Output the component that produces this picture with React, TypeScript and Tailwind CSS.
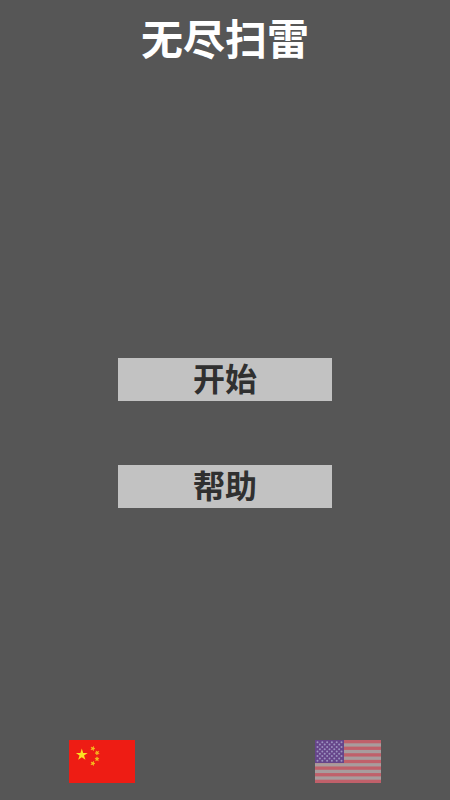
import { useState } from "react";

type Lang = "zh" | "en";

const TEXT = {
  zh: { title: "无尽扫雷", start: "开始", help: "帮助" },
  en: { title: "Endless Mines", start: "Start", help: "Help" },
};

const SMALL_STARS = [
  { x: 23.8, y: 8.5, angle: 20 },
  { x: 28.2, y: 12.8, angle: 45 },
  { x: 28, y: 19, angle: 0 },
  { x: 23.8, y: 23.4, angle: 20 },
];

const STAR_POINTS =
  "0,-1 0.225,-0.309 0.951,-0.309 0.363,0.118 0.588,0.809 0,0.382 -0.588,0.809 -0.363,0.118 -0.951,-0.309 -0.225,-0.309";

const ChinaFlag = () => (
  <svg viewBox="0 0 66 43" className="block w-full" aria-hidden="true">
    <rect width="66" height="43" fill="#ee1c14" />
    <polygon points={STAR_POINTS} fill="#fbe122" transform="translate(12.8 14.8) scale(6.2)" />
    {SMALL_STARS.map((star, index) => (
      <polygon
        key={index}
        points={STAR_POINTS}
        fill="#f5c31f"
        stroke="#f5c31f"
        strokeWidth="0.25"
        transform={`translate(${star.x} ${star.y}) rotate(${star.angle}) scale(2.2)`}
      />
    ))}
  </svg>
);

const UsaFlag = () => (
  <svg viewBox="0 0 66 43" className="block w-full" aria-hidden="true">
    <rect width="66" height="43" fill="#a89c9d" />
    {[0, 2, 4, 6, 8, 10, 12].map((row) => (
      <rect key={row} y={(row * 43) / 13} width="66" height={43 / 13} fill="#c0606a" />
    ))}
    <rect width="29" height="23" fill="#66458a" />
    {Array.from({ length: 9 }, (_, row) =>
      Array.from({ length: row % 2 ? 5 : 6 }, (_, col) => (
        <circle
          key={`${row}-${col}`}
          cx={2.5 + col * 4.8 + (row % 2 ? 2.4 : 0)}
          cy={2.3 + row * 2.3}
          r="1"
          fill="#9c93c0"
        />
      ))
    )}
  </svg>
);

const MenuButton = ({ label }: { label: string }) => (
  <button
    type="button"
    className="h-[43px] w-full bg-[#c2c2c2] pb-[5px] text-[32px] leading-9 font-bold text-[#303030] hover:bg-[#cecece]"
  >
    {label}
  </button>
);

const App = () => {
  const [lang, setLang] = useState<Lang>("zh");
  const text = TEXT[lang];

  return (
    <div className="flex min-h-screen flex-col bg-[#565656] font-['Noto_Sans_CJK_SC',sans-serif]">
      <header className="pt-3 pb-16 text-center">
        <h1 className="text-[42px] leading-[50px] font-bold text-white">{text.title}</h1>
      </header>

      <main className="flex flex-1 items-center justify-center">
        <div className="flex w-[214px] flex-col gap-16">
          <MenuButton label={text.start} />
          <MenuButton label={text.help} />
        </div>
      </main>

      {/* Language switch */}
      <footer className="flex justify-center gap-[180px] pb-[17px]">
        <button type="button" aria-label="中文" onClick={() => setLang("zh")} className="w-[66px]">
          <ChinaFlag />
        </button>
        <button type="button" aria-label="English" onClick={() => setLang("en")} className="w-[66px]">
          <UsaFlag />
        </button>
      </footer>
    </div>
  );
};

export default App;
